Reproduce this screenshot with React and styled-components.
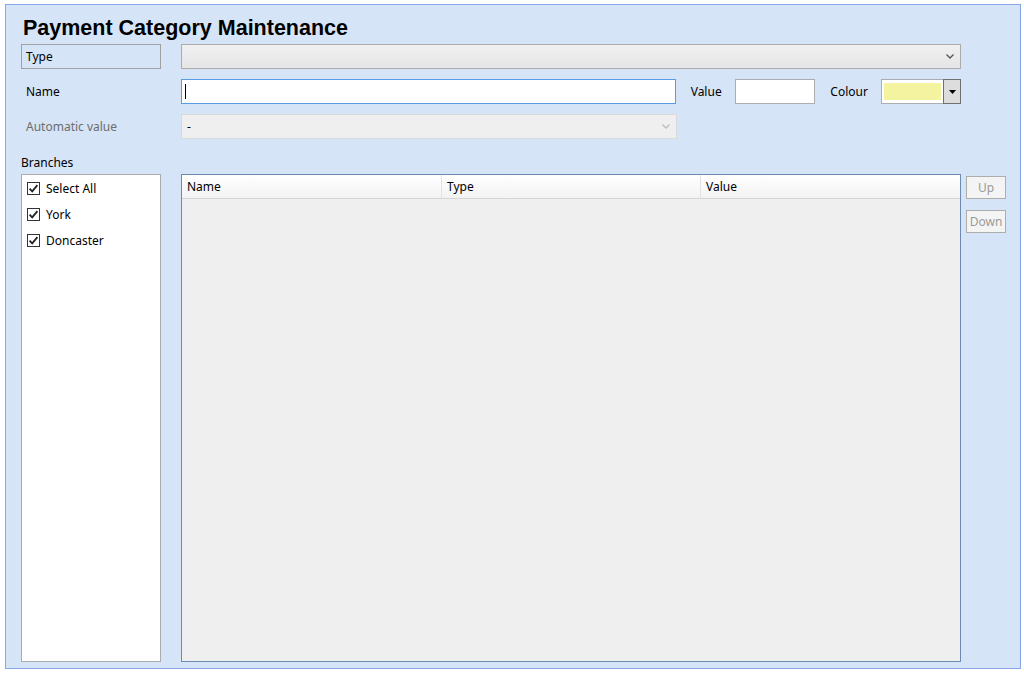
import React from 'react';
import styled, { createGlobalStyle } from 'styled-components';

const GlobalStyle = createGlobalStyle`
  html, body {
    margin: 0;
    padding: 0;
    background: #ffffff;
  }
  body {
    font-family: "Noto Sans", "Open Sans", sans-serif;
    font-size: 12px;
    color: #000;
  }
`;

const Chevron = ({ color = '#555' }) => (
  <svg width="8" height="5" viewBox="0 0 8 5">
    <path d="M0.5 0.5 L4 4 L7.5 0.5" fill="none" stroke={color} strokeWidth="1.3" />
  </svg>
);

const CheckMark = () => (
  <svg width="13" height="13" viewBox="0 0 13 13">
    <rect x="0.5" y="0.5" width="12" height="12" fill="#fff" stroke="#333" />
    <path d="M2.6 6.6 L5.2 9.3 L10.4 3.2" fill="none" stroke="#222" strokeWidth="1.8" />
  </svg>
);

const branches = ['Select All', 'York', 'Doncaster'];
const columns = [
  { name: 'Name', width: 260 },
  { name: 'Type', width: 259 },
  { name: 'Value', width: null },
];

export default function App() {
  return (
    <Page>
      <GlobalStyle />
      <Frame>
        <Title>Payment Category Maintenance</Title>
        <Form>
          <TypeLabel>Type</TypeLabel>
          <ComboBox>
            <span />
            <Chevron />
          </ComboBox>
          <Spacer />

          <FieldLabel>Name</FieldLabel>
          <NameRow>
            <TextInput $focused $width={496}>
              <Caret />
            </TextInput>
            <InlineLabel>Value</InlineLabel>
            <TextInput $width={81} />
            <InlineLabel $wide>Colour</InlineLabel>
            <ColourPicker>
              <Swatch />
              <ColourButton>
                <svg width="7" height="4" viewBox="0 0 7 4">
                  <path d="M0 0 L7 0 L3.5 4 Z" fill="#000" />
                </svg>
              </ColourButton>
            </ColourPicker>
          </NameRow>
          <Spacer />

          <FieldLabel $disabled>Automatic value</FieldLabel>
          <div>
            <ComboBox $disabled $width={496}>
              <span>-</span>
              <Chevron color="#bdbdbd" />
            </ComboBox>
          </div>
          <Spacer />

          <SectionLabel>Branches</SectionLabel>
          <span />
          <Spacer />

          <BranchList>
            {branches.map((b) => (
              <BranchItem key={b}>
                <CheckMark />
                <span>{b}</span>
              </BranchItem>
            ))}
          </BranchList>
          <Grid>
            <GridHeader>
              {columns.map((c) => (
                <HeaderCell key={c.name} style={c.width ? { width: c.width } : { flex: 1 }}>
                  {c.name}
                </HeaderCell>
              ))}
            </GridHeader>
          </Grid>
          <ButtonStack>
            <SideButton disabled>Up</SideButton>
            <SideButton disabled>Down</SideButton>
          </ButtonStack>
        </Form>
      </Frame>
    </Page>
  );
}

const Page = styled.div`
  width: 1024px;
  height: 673px;
  padding: 4px 3px 4px 5px;
  box-sizing: border-box;
`;

const Frame = styled.div`
  height: 100%;
  box-sizing: border-box;
  background: #d6e4f7;
  border: 1px solid #86a8e8;
  padding: 0 15px 6px 15px;
  display: flex;
  flex-direction: column;
`;

const Title = styled.h1`
  margin: 0;
  padding: 11px 0 0 2px;
  height: 39px;
  box-sizing: border-box;
  font-family: "Liberation Sans", Arial, sans-serif;
  font-weight: bold;
  font-size: 21.5px;
  line-height: 24px;
  color: #000;
`;

const Form = styled.div`
  flex: 1;
  display: grid;
  grid-template-columns: 140px 780px 40px;
  grid-template-rows: 25px 25px 25px 15px 1fr;
  column-gap: 20px;
  row-gap: 10px;
  align-items: center;
  & > :nth-child(3n) {
    margin-left: -15px;
  }
`;

const Spacer = styled.span``;

const TypeLabel = styled.div`
  height: 25px;
  box-sizing: border-box;
  border: 1px solid #a0a0a0;
  padding: 0 4px;
  display: flex;
  align-items: center;
`;

const FieldLabel = styled.div`
  padding-left: 5px;
  color: ${(p) => (p.$disabled ? '#6d6d6d' : '#000')};
`;

const SectionLabel = styled.div`
  align-self: end;
  line-height: 15px;
  margin-bottom: -6px;
`;

const ComboBox = styled.div`
  width: ${(p) => (p.$width ? `${p.$width}px` : 'auto')};
  height: 25px;
  box-sizing: border-box;
  border: 1px solid ${(p) => (p.$disabled ? '#d9d9d9' : '#acacac')};
  background: ${(p) =>
    p.$disabled ? '#efefef' : 'linear-gradient(#f0f0f0, #e5e5e5)'};
  display: flex;
  align-items: center;
  justify-content: space-between;
  padding: 0 6px 0 5px;
  color: #000;
`;

const NameRow = styled.div`
  display: flex;
  align-items: center;
  height: 25px;
`;

const TextInput = styled.div`
  width: ${(p) => p.$width}px;
  height: 25px;
  box-sizing: border-box;
  background: #fff;
  border: 1px solid ${(p) => (p.$focused ? '#569de5' : '#abadb3')};
  display: flex;
  align-items: center;
  padding-left: 3px;
`;

const Caret = styled.span`
  width: 1px;
  height: 15px;
  background: #000;
`;

const InlineLabel = styled.span`
  margin-left: 15px;
  width: ${(p) => (p.$wide ? '51px' : '44px')};
`;

const ColourPicker = styled.div`
  display: flex;
  width: 80px;
  height: 25px;
  box-sizing: border-box;
  border: 1px solid #abadb3;
  background: #fff;
`;

const Swatch = styled.div`
  flex: 1;
  margin: 3px 2px 3px 2px;
  background: #f3f3a0;
`;

const ColourButton = styled.div`
  width: 16px;
  margin: -1px -1px -1px 0;
  border: 1px solid #707070;
  background: #dddddd;
  display: flex;
  align-items: center;
  justify-content: center;
`;

const BranchList = styled.div`
  align-self: stretch;
  background: #fff;
  border: 1px solid #acacac;
  padding: 5px 0 0 5px;
  display: flex;
  flex-direction: column;
  gap: 9px;
`;

const BranchItem = styled.div`
  display: flex;
  align-items: center;
  gap: 6px;
  height: 17px;
`;

const Grid = styled.div`
  align-self: stretch;
  background: #efefef;
  border: 1px solid #6d8ab3;
  display: flex;
  flex-direction: column;
`;

const GridHeader = styled.div`
  display: flex;
  height: 23px;
  background: linear-gradient(#ffffff, #f3f3f3);
  border-bottom: 1px solid #d5d5d5;
`;

const HeaderCell = styled.div`
  box-sizing: border-box;
  padding-left: 5px;
  display: flex;
  align-items: center;
  border-right: 1px solid #e3e3e3;
  &:last-child {
    border-right: none;
  }
`;

const ButtonStack = styled.div`
  align-self: start;
  margin-top: 2px;
  display: flex;
  flex-direction: column;
  gap: 11px;
`;

const SideButton = styled.button`
  width: 40px;
  height: 23px;
  box-sizing: border-box;
  padding: 0;
  font-family: inherit;
  font-size: 12px;
  color: #9a9a9a;
  background: #f4f4f4;
  border: 1px solid #adadad;
`;
